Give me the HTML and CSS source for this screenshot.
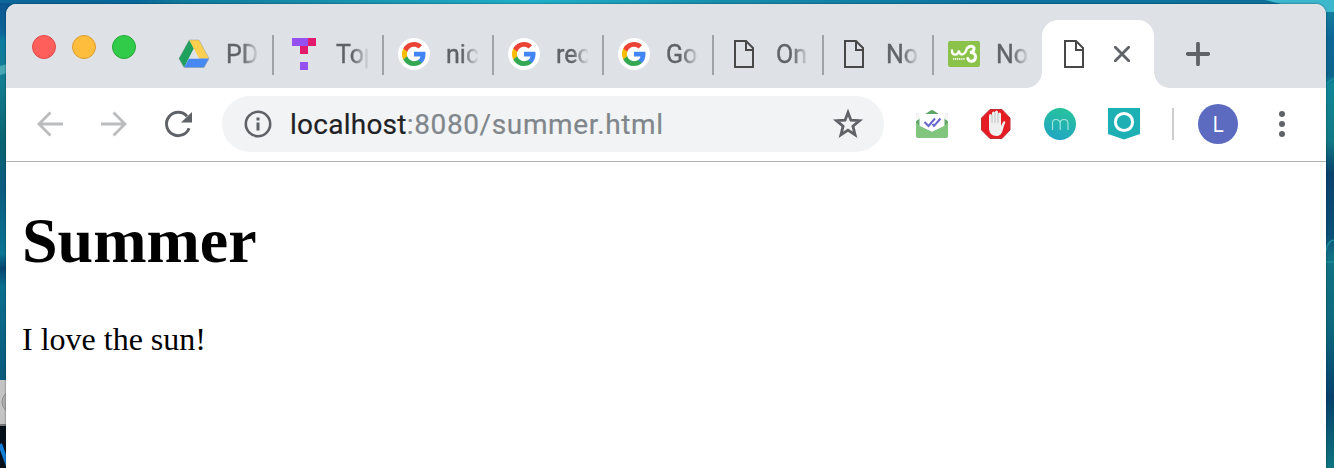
FILE: index.html
```html
<!DOCTYPE html>
<html lang="en">
<head>
<meta charset="utf-8">
<title>Summer</title>
<link rel="stylesheet" href="styles.css">
</head>
<body>
<svg class="wallpaper" width="1334" height="468" viewBox="0 0 1334 468" aria-hidden="true">
  <defs>
    <linearGradient id="top"><stop offset="0" stop-color="#0c6699"/><stop offset=".1" stop-color="#07679a"/><stop offset=".14" stop-color="#117b9a"/><stop offset=".4" stop-color="#20afc8"/><stop offset=".55" stop-color="#168cab"/><stop offset=".75" stop-color="#0d729f"/><stop offset="1" stop-color="#0d7199"/></linearGradient>
    <linearGradient id="left" x2="0" y2="1"><stop offset="0" stop-color="#0b568e"/><stop offset=".065" stop-color="#0c659a"/><stop offset=".08" stop-color="#0d7ba0"/><stop offset=".17" stop-color="#147e91"/><stop offset=".3" stop-color="#0a6370"/><stop offset=".4" stop-color="#0b5b80"/><stop offset=".54" stop-color="#0b7593"/><stop offset=".57" stop-color="#07456f"/><stop offset=".61" stop-color="#0a6f90"/><stop offset=".8" stop-color="#0b5b7c"/></linearGradient>
    <linearGradient id="right" x2="0" y2="1"><stop offset="0" stop-color="#1889a5"/><stop offset=".08" stop-color="#0d6794"/><stop offset=".16" stop-color="#0b658c"/><stop offset=".18" stop-color="#108696"/><stop offset=".3" stop-color="#127a87"/><stop offset=".37" stop-color="#0b426b"/><stop offset=".5" stop-color="#0b5075"/><stop offset=".55" stop-color="#117385"/><stop offset=".7" stop-color="#0d687e"/><stop offset=".85" stop-color="#07416a"/><stop offset="1" stop-color="#0d7580"/></linearGradient>
  </defs>
  <rect width="1334" height="8" fill="url(#top)"/>
  <rect y="3" width="10" height="465" fill="url(#left)"/>
  <rect x="1318" width="16" height="468" fill="url(#right)"/>
  <path d="M1265 0H1334V12H1312Q1285 5 1265 0Z" fill="#3db7cb"/>
  <path d="M0 66L7 64V73L0 75Z" fill="#46a7b6"/>
  <path d="M1324 85L1334 78M1326 252Q1327 241 1334 240M1326 262H1334" stroke="#1a8e9f" stroke-width="1.500" fill="none"/>
  <rect y="380" width="7" height="46" fill="#c4c4c4"/>
  <circle cx="13" cy="402" r="11" fill="#b0b0b0" stroke="#919191"/>
  <rect y="424" width="7" height="2" fill="#777"/>
  <rect y="426" width="7" height="42" fill="#06101a"/>
  <path d="M0 444L8 466" stroke="#147fd8" stroke-width="4"/>
</svg>

<svg class="defs" aria-hidden="true">
  <symbol id="page" viewBox="0 0 32 32"><path d="M7 3H18L25 10V29H7ZM18 3V12H25" fill="none" stroke="#484848" stroke-width="2"/></symbol>
  <symbol id="google" viewBox="0 0 32 32">
    <circle cx="16" cy="16" r="16" fill="#fff"/>
    <g transform="translate(4 4)">
      <path fill="#4285f4" d="M23.52 12.27c0-.85-.08-1.67-.22-2.45H12v4.64h6.46a5.52 5.52 0 0 1-2.4 3.62v3.01h3.88c2.27-2.09 3.58-5.17 3.58-8.82z"/>
      <path fill="#34a853" d="M12 24c3.24 0 5.96-1.07 7.94-2.91l-3.88-3.01c-1.07.72-2.45 1.15-4.06 1.15-3.13 0-5.78-2.11-6.72-4.95H1.27v3.11A12 12 0 0 0 12 24z"/>
      <path fill="#fbbc05" d="M5.28 14.28A7.2 7.2 0 0 1 4.9 12c0-.79.14-1.56.38-2.28V6.61H1.27a12 12 0 0 0 0 10.78z"/>
      <path fill="#ea4335" d="M12 4.77c1.76 0 3.34.61 4.59 1.8l3.44-3.44A11.54 11.54 0 0 0 12 0 12 12 0 0 0 1.27 6.61l4.01 3.11C6.22 6.88 8.87 4.77 12 4.77z"/>
    </g>
  </symbol>
</svg>

<div class="window">
  <div class="tabstrip">
    <div class="lights"><span class="light close"></span><span class="light minimize"></span><span class="light zoom"></span></div>
    <div class="tabs">
      <div class="tab">
        <svg class="favicon" viewBox="0 0 32 32"><path d="M11.2 2L16 10 6 29.500 1 20.500Z" fill="#1fa15d"/><path d="M11.200 2H21L31 20.500H21Z" fill="#ffcf4f"/><path d="M11 20.500H31L26 29.500H6Z" fill="#4688f4"/><path d="M16 11L11 20.500H21Z" fill="#dee1e6"/><path d="M11.200 2H21L31 20.500 26 29.500H6L1 20.500Z" fill="none" stroke="#87918b" stroke-opacity=".7" stroke-width=".6"/></svg>
        <span class="title">PD</span>
      </div>
      <div class="tab">
        <svg class="favicon" viewBox="0 0 32 32" shape-rendering="crispEdges"><path d="M4 0H20V8H4ZM12 24H20V32H12Z" fill="#9450f0"/><path d="M20 0H28V8H20V16H12V8H20Z" fill="#e21b6d"/></svg>
        <span class="title">Top</span>
      </div>
      <div class="tab"><svg class="favicon"><use href="#google"/></svg><span class="title">nic</span></div>
      <div class="tab"><svg class="favicon"><use href="#google"/></svg><span class="title">rec</span></div>
      <div class="tab"><svg class="favicon"><use href="#google"/></svg><span class="title">Go</span></div>
      <div class="tab"><svg class="favicon"><use href="#page"/></svg><span class="title">On</span></div>
      <div class="tab"><svg class="favicon"><use href="#page"/></svg><span class="title">No</span></div>
      <div class="tab last">
        <svg class="favicon" viewBox="0 0 32 32"><rect y="3" width="32" height="26" rx="2" fill="#8bc34a"/><path d="M4 12.500C4 18 10 18 11 12.500C11 18 17 18 19 10" fill="none" stroke="#fff" stroke-width="2.400" stroke-linecap="round"/><path d="M20 9.500C22 7.500 26.500 8 26 11C25.700 13.800 23 14.500 22 14.500C25 14 27.500 16 27.500 18.700C27.500 24.500 20.500 24.500 19.800 20.500" fill="none" stroke="#fff" stroke-width="3" stroke-linecap="round"/><path d="M5 21H17" stroke="#fff" stroke-width="1.500" stroke-dasharray="1.300 .6"/></svg>
        <span class="title">No</span>
      </div>
      <div class="tab active">
        <svg class="favicon"><use href="#page"/></svg>
        <svg class="close-tab" viewBox="0 0 16 16"><path d="M1.300 1.300L14.700 14.700M14.700 1.300L1.300 14.700" stroke="#5f6368" stroke-width="2.800" stroke-linecap="round"/></svg>
      </div>
    </div>
    <svg class="new-tab" viewBox="0 0 24 24"><path d="M12 1.800V22.200M1.800 12H22.200" stroke="#5f6368" stroke-width="3.800" stroke-linecap="round"/></svg>
  </div>

  <div class="toolbar">
    <div class="nav">
      <svg viewBox="0 0 32 32"><path d="M29 16H5M16.500 4.500L5 16L16.500 27.500" fill="none" stroke="#babcbe" stroke-width="2.800"/></svg>
      <svg viewBox="0 0 32 32"><path d="M3 16H27M15.500 4.500L27 16L15.500 27.500" fill="none" stroke="#babcbe" stroke-width="2.800"/></svg>
      <svg viewBox="0 0 32 32"><path d="M27.100 20.200A11.700 11.700 0 1 1 25 8.200" fill="none" stroke="#5f6368" stroke-width="2.900"/><path d="M30 4V14.500H19Z" fill="#5f6368"/></svg>
    </div>
    <div class="omnibox">
      <svg class="info" viewBox="0 0 28 28"><circle cx="14" cy="14" r="12.200" fill="none" stroke="#5f6368" stroke-width="2.600"/><path d="M12.500 7.500H15.500V10.500H12.500ZM12.500 12.500H15.500V20.500H12.500Z" fill="#5f6368"/></svg>
      <span class="url"><b>localhost</b>:8080/summer.html</span>
      <svg class="star" viewBox="0 0 32 32"><path d="M16 4.500L18.900 12.200 27.500 12.700 20.900 18.200 23.100 26.900 16 22.200 8.900 26.900 11.100 18.200 4.500 12.700 13.100 12.200Z" fill="none" stroke="#5f6368" stroke-width="2.800"/></svg>
    </div>
    <div class="extensions">
      <svg viewBox="0 0 32 32"><path d="M0 14Q0 12 2 11L14.500 2.500Q16 1.500 17.500 2.500L30 11Q32 12 32 14V27Q32 30 29 30H3Q0 30 0 27Z" fill="#5da668"/><path d="M3.500 6H28.500V18L16 24 3.500 18Z" fill="#fff"/><path d="M0 5H3.500V11L0 13ZM28.500 5H32V13L28.500 11Z" fill="#f3f3f3"/><path d="M0 14L3.500 18 16 24 28.500 18 32 14V27Q32 30 29 30H3Q0 30 0 27Z" fill="#82c57f"/><path d="M8.500 14L12.500 18 19 10.500M16.500 16L18 18 24.500 10.500" fill="none" stroke="#6666ce" stroke-width="2"/></svg>
      <svg viewBox="0 0 32 32"><path d="M10 1.500H22L30 10V22L22 30.500H10L1.500 22V10Z" fill="#e51c23" stroke="#bd3136"/><path d="M9 21V8Q9 6 10.500 6T12 8V5Q12 3.500 13.500 3.500T15 5V4Q15 2.500 16.500 2.500T18 4V6Q18 4.500 19.500 4.500T21 6V18L23 14Q24 12.500 25.500 14Q24 17 22.500 23Q21 28 16.500 28Q9.500 28 9 21Z" fill="#f0efef"/><path d="M12 7V15M15 5V15M18 5V15" stroke="#b9b9b9" stroke-width=".8"/></svg>
      <svg viewBox="0 0 32 32"><defs><linearGradient id="mint" x1=".65" x2=".35" y2="1"><stop offset="0" stop-color="#27c39c"/><stop offset="1" stop-color="#20a5c4"/></linearGradient></defs><circle cx="16" cy="16" r="16" fill="url(#mint)"/><path d="M8.500 22V15Q8.500 11.500 12 11.500T16.200 15V22M16.200 15Q16.200 11.500 20 11.500T24 15V22" fill="none" stroke="#a6e7dd" stroke-width="1.100"/></svg>
      <svg viewBox="0 0 32 32"><path d="M0 0H32V26L16 31.500 0 26Z" fill="#1cafb4"/><circle cx="16" cy="14" r="8.600" fill="none" stroke="#fff" stroke-width="3"/></svg>
    </div>
    <span class="divider"></span>
    <span class="avatar">L</span>
    <svg class="menu" viewBox="0 0 6 26"><g fill="#5f6368"><circle cx="3" cy="3" r="3"/><circle cx="3" cy="13" r="3"/><circle cx="3" cy="23" r="3"/></g></svg>
  </div>

  <main class="page">
    <h1>Summer</h1>
    <p>I love the sun!</p>
  </main>
</div>
</body>
</html>
```
FILE: styles.css
```css
* { box-sizing: border-box; }
body {
  margin: 0;
  height: 468px;
  padding: 4px 8px 0 6px;
  overflow: hidden;
  background: #0c6684;
  font-family: Roboto, "Liberation Sans", sans-serif;
}
svg { display: block; flex: none; }
.wallpaper { position: absolute; top: 0; left: 0; z-index: -1; }
.defs { position: absolute; width: 0; height: 0; }
.window {
  height: 464px;
  display: flex;
  flex-direction: column;
  background: #fff;
  border-radius: 10px 10px 0 0;
  overflow: hidden;
  box-shadow: 0 0 2px rgba(0, 20, 35, .7);
}
.tabstrip {
  height: 84px;
  flex: none;
  display: flex;
  align-items: flex-end;
  padding-left: 26px;
  background: #dee1e6;
}
.lights { display: flex; gap: 16px; margin-right: 28px; padding-bottom: 29px; }
.light { width: 24px; height: 24px; border-radius: 50%; border: 1px solid; }
.close { background: #fe5f5a; border-color: #e2494a; }
.minimize { background: #ffbd3d; border-color: #df9d34; }
.zoom { background: #32ca49; border-color: #24a936; }
.tabs { display: flex; align-items: flex-end; }
.tab {
  width: 110px;
  height: 40px;
  margin-bottom: 13px;
  padding-left: 14px;
  display: flex;
  align-items: center;
  gap: 16px;
  border-right: 2px solid #a0a4a8;
}
.tab.last { width: 108px; border: 0; }
.favicon { width: 32px; height: 32px; margin-bottom: 2px; }
.title {
  width: 32px;
  overflow: hidden;
  white-space: nowrap;
  font-size: 25px;
  line-height: 36px;
  color: #5f6368;
  -webkit-text-stroke: .35px #5f6368;
  -webkit-mask-image: linear-gradient(90deg, #000 50%, transparent 105%);
  mask-image: linear-gradient(90deg, #000 50%, transparent 105%);
}
.tab.active {
  position: relative;
  width: 112px;
  height: 68px;
  margin: 0;
  padding-left: 16px;
  gap: 24px;
  border: 0;
  border-radius: 16px 16px 0 0;
  background: #fff;
}
.tab.active .favicon { margin-bottom: 0; }
.tab.active::before, .tab.active::after {
  content: "";
  position: absolute;
  bottom: 0;
  width: 16px;
  height: 16px;
}
.tab.active::before { left: -16px; background: radial-gradient(circle at 0 0, transparent 15.500px, #fff 16.200px); }
.tab.active::after { right: -16px; background: radial-gradient(circle at 100% 0, transparent 15.500px, #fff 16.200px); }
.close-tab { width: 16px; height: 16px; }
.new-tab { width: 24px; height: 24px; margin: 0 0 22px 32px; }
.toolbar {
  height: 74px;
  flex: none;
  display: flex;
  align-items: center;
  padding: 0 38px 1px 28px;
  border-bottom: 1px solid #b1b3b0;
}
.nav { display: flex; gap: 32px; margin-right: 28px; }
.nav svg { width: 32px; height: 32px; }
.omnibox {
  width: 662px;
  height: 56px;
  display: flex;
  align-items: center;
  padding: 0 20px 0 22px;
  border-radius: 28px;
  background: #f1f3f4;
}
.info { width: 28px; height: 28px; margin-right: 18px; }
.url {
  flex: 1;
  padding-top: 1px;
  font-size: 28px;
  line-height: 40px;
  letter-spacing: .63px;
  color: #80868b;
  white-space: nowrap;
  -webkit-text-stroke: .2px currentColor;
}
.url b { font-weight: 400; letter-spacing: .25px; color: #202124; }
.star { width: 32px; height: 32px; }
.extensions { display: flex; gap: 32px; margin-left: 32px; }
.extensions svg { width: 32px; height: 32px; }
.divider { width: 2px; height: 32px; margin: 0 24px 0 32px; background: #cdcdcd; }
.avatar {
  width: 40px;
  height: 40px;
  margin-right: 41px;
  border-radius: 50%;
  background: #5c6bc0;
  color: #fff;
  font-family: "Open Sans", Roboto, sans-serif;
  font-size: 22px;
  line-height: 39px;
  text-align: center;
}
.menu { width: 6px; height: 26px; }
.page { padding: 0 16px; color: #000; font-family: "Liberation Serif", "Times New Roman", serif; }
.page h1 { margin: 42px 0 0; font-size: 64px; line-height: 74px; }
.page p { margin: 42px 0 0; font-size: 32px; line-height: 38px; }
```
